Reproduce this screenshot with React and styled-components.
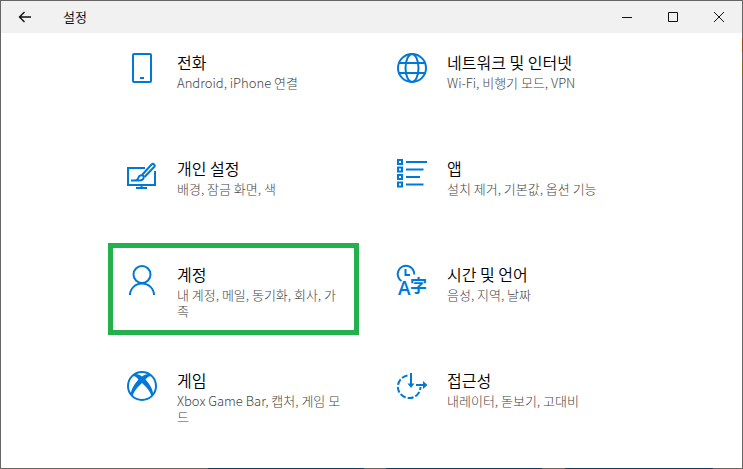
import React from "react";
import styled, { createGlobalStyle } from "styled-components";

const App = () => {
  return (
    <>
      <GlobalStyle />
      <Desktop>
        <Window>
          <TitleBar>
            <BackButton type="button" aria-label="뒤로">
              <svg width="14" height="12" viewBox="0 0 14 12">
                <path d="M13 6H1.500M6.500 1L1.500 6l5 5" />
              </svg>
            </BackButton>
            <WindowTitle>설정</WindowTitle>
            <WindowButton type="button" aria-label="최소화">
              <svg width="10" height="10" viewBox="0 0 10 10">
                <path d="M0 5.5h10" />
              </svg>
            </WindowButton>
            <WindowButton type="button" aria-label="최대화">
              <svg width="10" height="10" viewBox="0 0 10 10">
                <path d="M0.5 0.5h9v9h-9z" />
              </svg>
            </WindowButton>
            <WindowButton type="button" aria-label="닫기">
              <svg width="10" height="10" viewBox="0 0 10 10">
                <path d="M0 0l10 10M10 0L0 10" />
              </svg>
            </WindowButton>
          </TitleBar>
          <Main>
            <CategoryGrid>
              {categories.map((category) => {
                return (
                  <Tile key={category.title} type="button" $highlighted={category.highlighted}>
                    <Icon viewBox="0 0 30 30" aria-hidden="true">
                      {category.icon}
                    </Icon>
                    <TileText>
                      <TileTitle>{category.title}</TileTitle>
                      <TileDescription>{category.description}</TileDescription>
                    </TileText>
                  </Tile>
                );
              })}
            </CategoryGrid>
          </Main>
        </Window>
      </Desktop>
    </>
  );
};

const PhoneIcon = () => (
  <>
    <rect x="6" y="1" width="18" height="28" rx="1" />
    <path d="M13 25h4" />
  </>
);

const GlobeIcon = () => (
  <>
    <circle cx="15" cy="15" r="14" />
    <ellipse cx="15" cy="15" rx="6.5" ry="14" />
    <path d="M2 10h26M2 20h26" />
  </>
);

const PersonalizationIcon = () => (
  <>
    <path d="M18 9H1v17h27V12M14.5 26v3M9 29h11" />
    <path d="M4 21.5h8c3.500 0 5.500-2 4.500-4.500-2-1.500-4.500-.5-5 1.500-.4 1.700-1 2.500-3 3" />
    <path d="M15 16L24.500 5.500c1.800-1.600 4.200.6 2.600 2.500L17.500 18" />
  </>
);

const AppsIcon = () => (
  <>
    <path d="M1 1h4v4H1zM1 8.500h4v4H1zM1 16h4v4H1zM1 23.500h4v4H1z" />
    <path d="M9 3h21M9 10.500h17.500M9 18h14M9 25.500h17.500" />
  </>
);

const PersonIcon = () => (
  <>
    <circle cx="15" cy="9.500" r="8.500" />
    <path d="M3 30a12 11.500 0 0 1 24 0" />
  </>
);

const TimeLanguageIcon = () => (
  <>
    <path d="M4.500 16A8.300 8.300 0 1 1 17.300 9.500M8.500 4v6H13" />
    <Glyph x="1" y="30" $latin>
      A
    </Glyph>
    <Glyph x="13" y="27">
      字
    </Glyph>
  </>
);

const XboxIcon = () => (
  <>
    <circle cx="15" cy="15" r="14" />
    <FilledPath d="M6 3.500C9 2 12.500 3.500 15 5.500 17.500 3.500 21 2 24 3.500L25 5C22.500 4.500 20 6.500 18.500 8.500 22.500 13 26.500 19 26 23.500L24.500 25.500C23.500 20.500 19 15.500 15 12 11 15.500 6.500 20.500 5.500 25.500L4 23.500C3.500 19 7.500 13 11.500 8.500 10 6.500 7.500 4.500 5 5z" />
  </>
);

const AccessIcon = () => (
  <>
    <path d="M10.500 4.600A11.300 11.300 0 1 0 23.500 16" strokeDasharray="6 2" />
    <path d="M14 2v13M19 14h10" />
    <FilledPath d="M10.500 12.500L14 17l3.500-4.500zM26 10l4.500 4-4.500 4z" />
  </>
);

const categories = [
  { title: "전화", description: "Android, iPhone 연결", icon: <PhoneIcon /> },
  { title: "네트워크 및 인터넷", description: "Wi-Fi, 비행기 모드, VPN", icon: <GlobeIcon /> },
  { title: "개인 설정", description: "배경, 잠금 화면, 색", icon: <PersonalizationIcon /> },
  { title: "앱", description: "설치 제거, 기본값, 옵션 기능", icon: <AppsIcon /> },
  {
    title: "계정",
    description: "내 계정, 메일, 동기화, 회사, 가족",
    icon: <PersonIcon />,
    highlighted: true,
  },
  { title: "시간 및 언어", description: "음성, 지역, 날짜", icon: <TimeLanguageIcon /> },
  { title: "게임", description: "Xbox Game Bar, 캡처, 게임 모드", icon: <XboxIcon /> },
  { title: "접근성", description: "내레이터, 돋보기, 고대비", icon: <AccessIcon /> },
];

const GlobalStyle = createGlobalStyle`
  * {
    box-sizing: border-box;
  }
  body {
    margin: 0;
    font-family: "Noto Sans CJK KR", sans-serif;
  }
  button {
    border: 0;
    padding: 0;
    background: none;
    font-family: inherit;
  }
`;

// the desktop shows through as a thin line around the window
const Desktop = styled.div`
  display: flex;
  min-height: 100vh;
  padding: 1px;
  background:
    linear-gradient(
      90deg,
      transparent 28%,
      #163c5c 28% 49%,
      transparent 49% 52%,
      #163c5c 52% 73%,
      transparent 73% 76%,
      #163c5c 76% 96%,
      transparent 96%
    ) bottom / 100% 1px no-repeat,
    linear-gradient(
      transparent 8%,
      #8a4a1c 8% 11%,
      transparent 11% 13%,
      #7c6a10 13% 16%,
      transparent 16%
    ) right / 1px 100% no-repeat,
    #676464;
`;

const Window = styled.div`
  display: flex;
  flex: 1;
  flex-direction: column;
  background: #fff;
`;

const TitleBar = styled.header`
  display: flex;
  height: 32px;
  background: #f1f1f1;
`;

const WindowButton = styled.button`
  display: flex;
  align-items: center;
  justify-content: center;
  width: 46px;

  svg {
    fill: none;
    stroke: #111;
  }
`;

const BackButton = styled(WindowButton)`
  width: 48px;

  svg {
    stroke-width: 1.4;
  }
`;

const WindowTitle = styled.div`
  flex: 1;
  padding-left: 14px;
  font-size: 13px;
  line-height: 32px;
  color: #111;
`;

const Main = styled.main`
  padding: 3px 6px 0 0;
`;

const CategoryGrid = styled.div`
  display: grid;
  grid-template-columns: repeat(auto-fit, 241px);
  gap: 24px 29px;
  justify-content: center;
  max-width: 780px;
  margin: 0 auto;
`;

const Tile = styled.button`
  display: flex;
  gap: 20px;
  align-items: flex-start;
  min-height: 82px;
  padding: 17px 10px 0 14px;
  text-align: left;
  outline: ${(props) => (props.$highlighted ? "5px solid #22b14c" : "none")};
`;

const Icon = styled.svg`
  flex: none;
  width: 30px;
  height: 30px;
  overflow: visible;
  fill: none;
  stroke: #0078d7;
  stroke-width: 2;
`;

const FilledPath = styled.path`
  fill: #0078d7;
  stroke: none;
`;

const Glyph = styled.text`
  fill: #0078d7;
  stroke: none;
  font-family: ${(props) => (props.$latin ? '"Open Sans"' : '"Noto Sans CJK KR"')}, sans-serif;
  font-size: ${(props) => (props.$latin ? "19px" : "17px")};
  font-weight: 600;
`;

const TileText = styled.div`
  flex: 1;
`;

const TileTitle = styled.div`
  margin-bottom: 4px;
  font-size: 16px;
  font-weight: 350;
  line-height: 18px;
  color: #000;
`;

const TileDescription = styled.div`
  font-size: 13px;
  font-weight: 300;
  line-height: 16px;
  color: #444;
`;

export default App;
